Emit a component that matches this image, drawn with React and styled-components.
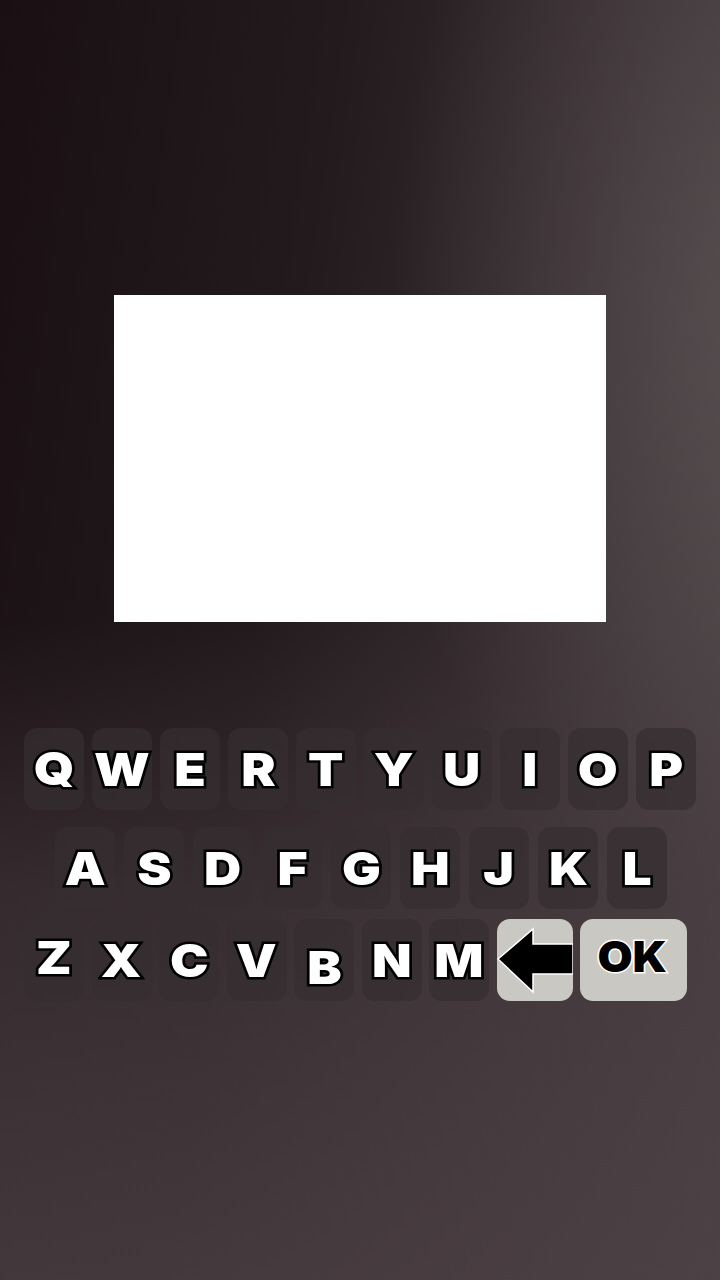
import styled, { createGlobalStyle } from "styled-components";

const Global = createGlobalStyle`
  html, body {
    margin: 0;
    padding: 0;
    background: #2a2024;
  }
`;

const Screen = styled.div`
  width: 720px;
  height: 1280px;
  overflow: hidden;
  position: relative;
  display: flex;
  flex-direction: column;
  align-items: center;
  padding-top: 295px;
  box-sizing: border-box;
  background:
    radial-gradient(ellipse 380px 680px at 770px 320px, rgba(95, 86, 88, 0.7), rgba(95, 86, 88, 0) 100%),
    linear-gradient(98deg, #1a1013 0%, #221a1d 38%, #372d31 68%, #4b4345 100%);
`;

const Shade = styled.div`
  position: absolute;
  left: 0;
  top: 620px;
  width: 720px;
  height: 660px;
  background: linear-gradient(180deg, rgba(60, 48, 52, 0) 0%, rgba(72, 60, 64, 0.55) 40%, rgba(76, 64, 68, 0.8) 100%);
  pointer-events: none;
`;

const Display = styled.div`
  width: 492px;
  height: 327px;
  background: #ffffff;
  position: relative;
  z-index: 1;
`;

const Keyboard = styled.div`
  margin-top: 106px;
  width: 720px;
  display: flex;
  flex-direction: column;
  position: relative;
  z-index: 1;
`;

const Row = styled.div`
  display: flex;
  gap: ${(p) => p.$gap}px;
  padding-left: ${(p) => p.$left}px;
  margin-top: ${(p) => p.$top || 0}px;
`;

const Key = styled.div`
  width: ${(p) => p.$w || 60}px;
  height: 82px;
  border-radius: 13px;
  background: ${(p) => (p.$light ? "#c9c8c3" : "rgba(52, 46, 48, 0.72)")};
  display: flex;
  align-items: center;
  justify-content: center;
  flex-shrink: 0;
`;

const Letter = styled.span`
  font-family: Inter, "DejaVu Sans", sans-serif;
  font-weight: 900;
  font-size: 46px;
  line-height: 1;
  color: ${(p) => (p.$dark ? "#000" : "#fff")};
  -webkit-text-stroke: 5px ${(p) => (p.$dark ? "#fff" : "#000")};
  paint-order: stroke fill;
  transform: translateY(${(p) => p.$dy || 0}px) scaleX(1.12);
`;

const OkLetter = styled(Letter)`
  font-size: 42px;
  -webkit-text-stroke: 3px #fff;
  transform: translate(-1px, -3px) scaleX(1.08);
`;

const Arrow = () => (
  <svg width="76" height="82" viewBox="0 0 76 82">
    <path
      d="M1 40 L36 10 L36 25 L76 25 L76 55 L36 55 L36 73 Z"
      fill="#000"
      stroke="#fff"
      strokeWidth="1.5"
      strokeLinejoin="miter"
    />
  </svg>
);

const row1 = ["Q", "W", "E", "R", "T", "Y", "U", "I", "O", "P"];
const row2 = ["A", "S", "D", "F", "G", "H", "J", "K", "L"];
const row3 = ["Z", "X", "C", "V", "B", "N", "M"];
const offsets = { B: 7, Z: -3, Q: -1 };

const App = () => {
  return (
    <>
      <Global />
      <Screen>
        <Shade />
        <Display />
        <Keyboard>
          <Row $gap={8} $left={24}>
            {row1.map((k) => (
              <Key key={k}>
                <Letter $dy={offsets[k]}>{k}</Letter>
              </Key>
            ))}
          </Row>
          <Row $gap={9} $left={55} $top={17}>
            {row2.map((k) => (
              <Key key={k}>
                <Letter $dy={offsets[k]}>{k}</Letter>
              </Key>
            ))}
          </Row>
          <Row $gap={7.5} $left={24} $top={10}>
            {row3.map((k) => (
              <Key key={k}>
                <Letter $dy={offsets[k]}>{k}</Letter>
              </Key>
            ))}
            <Key $w={76} $light>
              <Arrow />
            </Key>
            <Key $w={107} $light>
              <OkLetter $dark>OK</OkLetter>
            </Key>
          </Row>
        </Keyboard>
      </Screen>
    </>
  );
};

export default App;
